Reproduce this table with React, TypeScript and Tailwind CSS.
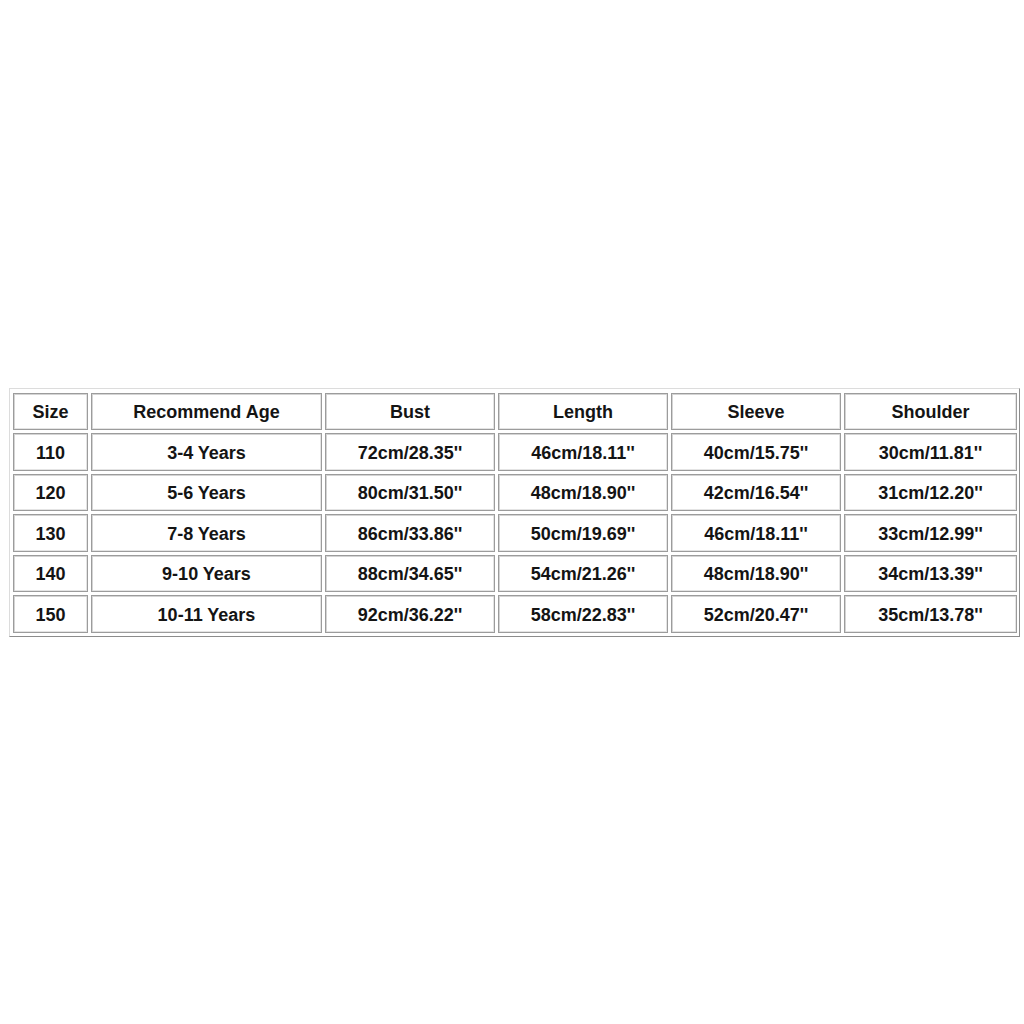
const headers = ["Size", "Recommend Age", "Bust", "Length", "Sleeve", "Shoulder"];

const rows = [
  ["110", "3-4 Years", "72cm/28.35''", "46cm/18.11''", "40cm/15.75''", "30cm/11.81''"],
  ["120", "5-6 Years", "80cm/31.50''", "48cm/18.90''", "42cm/16.54''", "31cm/12.20''"],
  ["130", "7-8 Years", "86cm/33.86''", "50cm/19.69''", "46cm/18.11''", "33cm/12.99''"],
  ["140", "9-10 Years", "88cm/34.65''", "54cm/21.26''", "48cm/18.90''", "34cm/13.39''"],
  ["150", "10-11 Years", "92cm/36.22''", "58cm/22.83''", "52cm/20.47''", "35cm/13.78''"],
];

const Cell = ({ text }: { text: string }) => (
  <div className="flex h-[37.5px] items-center justify-center border border-[#9c9c9c] pt-[3px] shadow-[inset_1px_1px_0_#d4d4d4,inset_-1px_-1px_0_#e4e4e4] text-[18px] font-bold text-[#141414]">
    {text}
  </div>
);

export default function App() {
  return (
    <div
      className="flex h-screen w-full items-center bg-white"
      style={{ fontFamily: '"Liberation Sans", Arial, sans-serif' }}
    >
      <div className="ml-[9px] border border-t-[#dcdcdc] border-l-[#dcdcdc] border-r-[#8c8c8c] border-b-[#8c8c8c] pt-[4px] pl-[3px] pr-[2px] pb-[3px]">
        <div className="grid grid-cols-[75px_231px_170px_170px_170px_173px] gap-[3px]">
          {headers.map((h) => (
            <Cell key={h} text={h} />
          ))}
          {rows.map((row) =>
            row.map((value, i) => <Cell key={row[0] + i} text={value} />)
          )}
        </div>
      </div>
    </div>
  );
}
